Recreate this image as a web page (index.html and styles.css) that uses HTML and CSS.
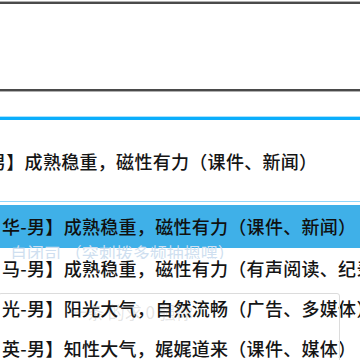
FILE: index.html
```html
<!DOCTYPE html>
<html lang="zh-CN">
  <head>
    <meta charset="UTF-8" />
    <meta name="viewport" content="width=device-width, initial-scale=1.0" />
    <title>配音员选择</title>
    <link rel="stylesheet" href="styles.css">
  </head>
  <body class="body">
    <div class="panel"></div>
    <div class="gap"></div>
    <div class="combo">
      <p class="item current">男】成熟稳重，磁性有力（课件、新闻）</p>
    </div>
    <ul class="list">
      <li class="item selected">华-男】成熟稳重，磁性有力（课件、新闻）</li>
      <li class="item">马-男】成熟稳重，磁性有力（有声阅读、纪录片）</li>
      <li class="item">光-男】阳光大气，自然流畅（广告、多媒体）</li>
      <li class="item">英-男】知性大气，娓娓道来（课件、媒体）</li>
    </ul>
    <div class="ghost ghostTop">自闭司 （突刺拨多频抽摁嘿）</div>
    <div class="ghost ghostMid">一条 的求 0 强你</div>
    <div class="ghostBox"></div>
  </body>
</html>
```

FILE: styles.css
```css
.body {
  margin: 0;
  width: 360px;
  height: 360px;
  overflow: hidden;
  position: relative;
  background-color: #fff;
  font-family: "Noto Sans CJK SC", "Noto Sans", sans-serif;
  color: #151515;
}
.panel {
  margin-top: 2px;
  height: 85px;
  border-top: 2px solid #4a4a4a;
  border-bottom: 2px solid #4a4a4a;
  box-shadow: 0 -1px 0 #b0b0b0, 0 1px 0 #b0b0b0;
}
.gap {
  height: 26px;
}
.combo {
  height: 81px;
  border-top: 3px solid #0aaefc;
  border-bottom: 1px solid #8fd6fb;
  box-shadow: 0 -1px 0 #a9e2fd;
  display: flex;
  align-items: center;
}
.item {
  margin: 0;
  font-size: 18px;
  font-weight: 500;
  letter-spacing: 0.3px;
  line-height: 40px;
  height: 40px;
  white-space: nowrap;
  overflow: hidden;
  padding-left: 2px;
}
.current {
  text-indent: -12px;
  padding-left: 0;
}
.list {
  list-style: none;
  margin: 3px 0 0;
  padding: 0;
}
.selected {
  height: 43px;
  line-height: 43px;
  background-color: #3fb0e8;
  color: #101010;
}
.ghost {
  position: absolute;
  left: 10px;
  font-size: 17px;
  white-space: nowrap;
  pointer-events: none;
}
.ghostTop {
  top: 240px;
  color: #cfdff0;
  height: 19px;
  overflow: hidden;
}
.ghostMid {
  top: 299px;
  left: 70px;
  color: rgba(120, 120, 120, 0.2);
}
.ghostBox {
  position: absolute;
  left: -2px;
  top: 293px;
  width: 340px;
  height: 80px;
  border: 1px solid #dcdcdc;
  border-radius: 3px;
}
```
